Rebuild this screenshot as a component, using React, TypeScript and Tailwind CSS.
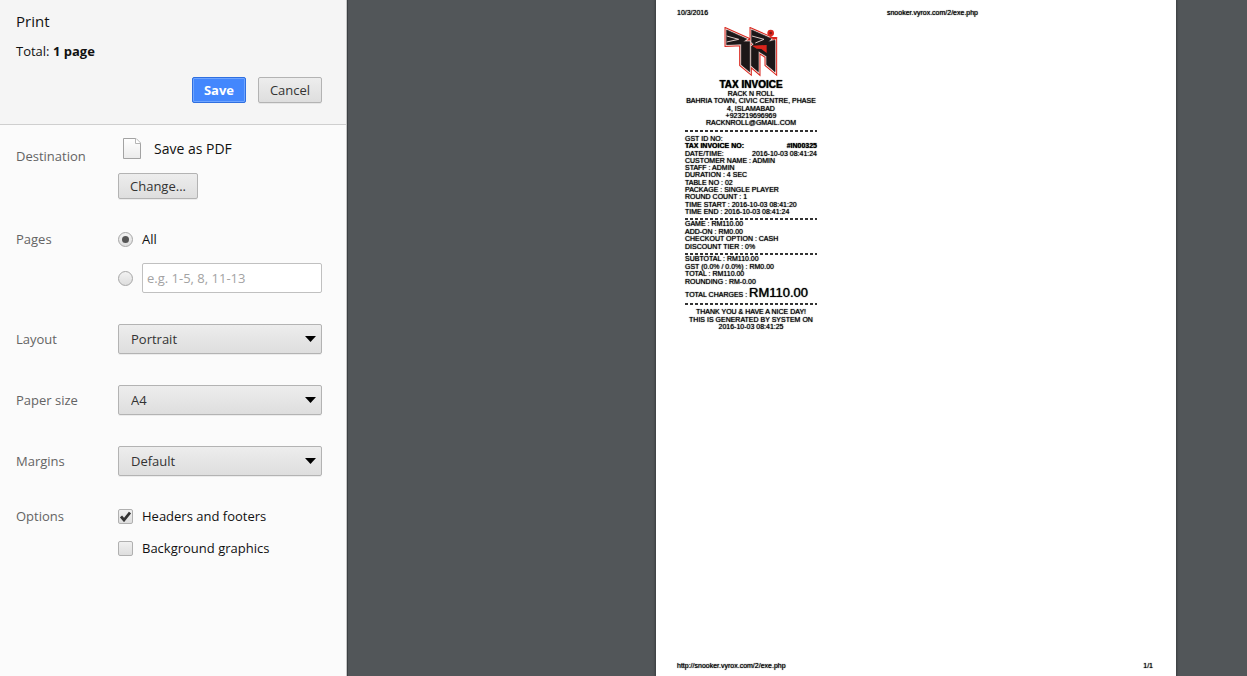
import { useId, useState } from "react";
import type { ReactNode } from "react";

const greyControl =
  "rounded-[2px] border border-[#b3b3b3] bg-gradient-to-b from-[#ededed] to-[#dedede] text-[#333] shadow-[0_1px_0_rgba(0,0,0,0.06)]";

function DocumentIcon() {
  return (
    <svg width="20" height="23" viewBox="0 0 20 23" aria-hidden="true">
      <defs>
        <linearGradient id="sheet" x1="0" y1="0" x2="0" y2="1">
          <stop offset="0" stopColor="#fff" />
          <stop offset="1" stopColor="#ebebeb" />
        </linearGradient>
      </defs>
      <path d="M1.500 1.500h12.500l4.500 4.500v15.500h-17z" fill="url(#sheet)" stroke="#a3a3a3" />
      <path d="M13.500 1.500v5h5" fill="#fff" stroke="#b5b5b5" />
    </svg>
  );
}

const logoLeft = "M8 9L68 36L57 44L77 44V134L52 113V51L8 53Z";
const logoRight = "M83 9L142 35L132 44L153 40V134L128 113V88L103 72V134L82 116V58L90 52L83 46Z";

function Logo() {
  return (
    <svg className="mx-auto" width="54" height="50" viewBox="0 0 162 150" aria-hidden="true">
      <g stroke="#d9251c" strokeWidth="13" fill="#d9251c" strokeLinejoin="miter" strokeMiterlimit="3">
        <path d={logoLeft} />
        <path d={logoRight} />
      </g>
      <g stroke="#f0dcd8" strokeWidth="7" fill="#f0dcd8" strokeMiterlimit="3">
        <path d={logoLeft} />
        <path d={logoRight} />
      </g>
      <g fill="#1c1718" stroke="#1c1718" strokeWidth="2">
        <path d={logoLeft} />
        <path d={logoRight} />
      </g>
      <path d="M84 56L128 54V78L112 66L98 65Z" fill="#d9251c" />
      <path d="M8 27L44 37L8 45" fill="none" stroke="#d8c5c2" strokeWidth="3" />
      <path d="M84 27L120 37L94 48" fill="none" stroke="#d8c5c2" strokeWidth="3" />
      <circle cx="140" cy="18" r="10" fill="#d9251c" />
      <circle cx="140" cy="18" r="4" fill="#7d1b16" />
      <path d="M134 30h27l-9 8z" fill="#d9251c" />
    </svg>
  );
}

function SelectRow({ label, options, value }: { label: string; options: string[]; value: string }) {
  const id = useId();
  return (
    <div className="flex items-center">
      <label htmlFor={id} className="w-[102px] shrink-0 text-[#646464]">
        {label}
      </label>
      <div className="relative flex-1">
        <select
          id={id}
          defaultValue={value}
          className={`h-[30px] w-full appearance-none pl-3 pr-7 ${greyControl}`}
        >
          {options.map((o) => (
            <option key={o}>{o}</option>
          ))}
        </select>
        <svg
          className="pointer-events-none absolute right-[6px] top-3"
          width="11"
          height="6"
          viewBox="0 0 11 6"
          aria-hidden="true"
        >
          <path d="M0 0h11L5.500 6z" fill="#000" />
        </svg>
      </div>
    </div>
  );
}

function Radio({
  id,
  label,
  checked,
  onSelect,
}: {
  id: string;
  label?: string;
  checked: boolean;
  onSelect: () => void;
}) {
  return (
    <span className="grid size-[15px] shrink-0 place-items-center">
      <input
        id={id}
        type="radio"
        name="pages"
        aria-label={label}
        checked={checked}
        onChange={onSelect}
        className="peer col-start-1 row-start-1 size-[15px] appearance-none rounded-full border border-[#a6a6a6] bg-gradient-to-b from-[#f2f2f2] to-[#dedede]"
      />
      <span className="pointer-events-none z-10 col-start-1 row-start-1 hidden size-[7px] rounded-full bg-[#555] peer-checked:block" />
    </span>
  );
}

function Check({ label, initial }: { label: string; initial: boolean }) {
  const [on, setOn] = useState(initial);
  return (
    <label className="flex h-5 items-center gap-[9px] text-[#111]">
      <span className="grid size-[15px] shrink-0 place-items-center">
        <input
          type="checkbox"
          checked={on}
          onChange={() => setOn(!on)}
          className="peer col-start-1 row-start-1 size-[15px] appearance-none rounded-[2px] border border-[#b0b0b0] bg-gradient-to-b from-[#f0f0f0] to-[#dedede]"
        />
        <svg
          className="pointer-events-none z-10 col-start-1 row-start-1 hidden peer-checked:block"
          width="11"
          height="11"
          viewBox="0 0 11 11"
          aria-hidden="true"
        >
          <path d="M1 5.500L4 9L10 1.500" fill="none" stroke="#333" strokeWidth="2.800" />
        </svg>
      </span>
      {label}
    </label>
  );
}

function Sidebar() {
  const [pages, setPages] = useState<"all" | "range">("all");
  return (
    <aside className="w-[347px] shrink-0 border-r border-[#c6c6c6] bg-[#fbfbfb] font-['Open_Sans','Noto_Sans',sans-serif] text-[13px] leading-5">
      <header className="border-b border-[#cfcfcf] bg-[#f5f5f5] pb-[21px] pl-4 pr-6 pt-[11px] text-[#111]">
        <h1 className="text-[15px] leading-5">Print</h1>
        <p className="mt-[10px]">
          Total: <b>1 page</b>
        </p>
        <div className="mt-4 flex justify-end gap-3">
          <button
            type="button"
            className="h-[26px] w-[54px] rounded-[2px] border border-[#2f6fe0] bg-[#4387fd] font-bold text-white shadow-[inset_0_0_0_1px_#6fa5ff]"
          >
            Save
          </button>
          <button type="button" className={`h-[26px] w-16 ${greyControl}`}>
            Cancel
          </button>
        </div>
      </header>

      <form className="pb-6 pl-4 pr-6 pt-3" onSubmit={(e) => e.preventDefault()}>
        <section className="flex">
          <h2 className="w-[102px] shrink-0 pt-[9px] text-[#646464]">Destination</h2>
          <div className="flex-1">
            <div className="flex items-center gap-3 pl-1 text-[14px] text-[#111]">
              <DocumentIcon />
              Save as PDF
            </div>
            <button type="button" className={`mt-[13px] h-[26px] w-20 ${greyControl}`}>
              Change...
            </button>
          </div>
        </section>

        <fieldset className="mt-[30px] flex">
          <legend className="float-left w-[102px] shrink-0 text-[#646464]">Pages</legend>
          <div className="flex-1">
            <div className="flex items-center gap-[9px] text-[#111]">
              <Radio id="pages-all" checked={pages === "all"} onSelect={() => setPages("all")} />
              <label htmlFor="pages-all">All</label>
            </div>
            <div className="mt-[14px] flex items-center gap-[9px]">
              <Radio
                id="pages-range"
                label="Page range"
                checked={pages === "range"}
                onSelect={() => setPages("range")}
              />
              <input
                type="text"
                aria-label="Pages to print"
                placeholder="e.g. 1-5, 8, 11-13"
                onFocus={() => setPages("range")}
                className="h-[30px] w-full min-w-0 rounded-[2px] border border-[#c0c0c0] bg-white px-1 placeholder:text-[#a3a3a3]"
              />
            </div>
          </div>
        </fieldset>

        <div className="mt-[31px] flex flex-col gap-[31px]">
          <SelectRow label="Layout" value="Portrait" options={["Portrait", "Landscape"]} />
          <SelectRow label="Paper size" value="A4" options={["A4", "Letter", "Legal"]} />
          <SelectRow label="Margins" value="Default" options={["Default", "None", "Minimum", "Custom"]} />
        </div>

        <fieldset className="mt-[30px]">
          <legend className="float-left w-[102px] text-[#646464]">Options</legend>
          <div className="flex flex-col gap-3">
            <Check label="Headers and footers" initial={true} />
            <Check label="Background graphics" initial={false} />
          </div>
        </fieldset>
      </form>
    </aside>
  );
}

function Rule({ className }: { className: string }) {
  return (
    <svg className={`block h-[2px] w-full ${className}`} aria-hidden="true">
      <line x1="0" y1="1" x2="100%" y2="1" stroke="#000" strokeWidth="2" strokeOpacity="0.8" strokeDasharray="3 2" />
    </svg>
  );
}

function Lines({ children, className }: { children: ReactNode; className: string }) {
  return <div className={`flex flex-col justify-between ${className}`}>{children}</div>;
}

function Receipt() {
  return (
    <article className="ml-[29px] mt-[10px] w-[132px] whitespace-nowrap text-[7px] leading-[7px]">
      <Logo />
      <h2 className="mt-[2px] text-center text-[10px] font-bold leading-[11px]">TAX INVOICE</h2>
      <Lines className="min-h-9 text-center">
        <p>RACK N ROLL</p>
        <p>BAHRIA TOWN, CIVIC CENTRE, PHASE</p>
        <p>4, ISLAMABAD</p>
        <p>+923219696969</p>
        <p>RACKNROLL@GMAIL.COM</p>
      </Lines>
      <Rule className="mb-[3px] mt-1" />
      <Lines className="min-h-20">
        <p>GST ID NO:</p>
        <p className="flex justify-between font-bold">
          <span>TAX INVOICE NO:</span>
          <span>#IN00325</span>
        </p>
        <p className="flex justify-between">
          <span>DATE/TIME:</span>
          <span>2016-10-03 08:41:24</span>
        </p>
        <p>CUSTOMER NAME : ADMIN</p>
        <p>STAFF : ADMIN</p>
        <p>DURATION : 4 SEC</p>
        <p>TABLE NO : 02</p>
        <p>PACKAGE : SINGLE PLAYER</p>
        <p>ROUND COUNT : 1</p>
        <p>TIME START : 2016-10-03 08:41:20</p>
        <p>TIME END : 2016-10-03 08:41:24</p>
      </Lines>
      <Rule className="mt-[3px]" />
      <Lines className="min-h-[30px]">
        <p>GAME : RM110.00</p>
        <p>ADD-ON : RM0.00</p>
        <p>CHECKOUT OPTION : CASH</p>
        <p>DISCOUNT TIER : 0%</p>
      </Lines>
      <Rule className="mt-[3px]" />
      <Lines className="min-h-[30px]">
        <p>SUBTOTAL : RM110.00</p>
        <p>GST (0.0% / 0.0%) : RM0.00</p>
        <p>TOTAL : RM110.00</p>
        <p>ROUNDING : RM-0.00</p>
      </Lines>
      <p className="leading-4">
        TOTAL CHARGES : <span className="text-[13px]">RM110.00</span>
      </p>
      <Rule className="mb-[3px]" />
      <Lines className="min-h-[22px] text-center">
        <p>THANK YOU &amp; HAVE A NICE DAY!</p>
        <p>THIS IS GENERATED BY SYSTEM ON</p>
        <p>2016-10-03 08:41:25</p>
      </Lines>
    </article>
  );
}

export default function App() {
  return (
    <div className="flex min-h-screen bg-[#525659] font-['Liberation_Sans',Arial,sans-serif] text-black">
      <Sidebar />
      <main className="flex flex-1 border-l border-[#3c4043] pr-[71px]">
        <section className="ml-auto flex w-[520px] flex-col bg-white shadow-[0_0_2px_1px_#3a3d3f] [text-shadow:0_0_1px_#000]">
          <header className="grid grid-cols-[1fr_auto_1fr] pl-[21px] pr-[23px] pt-[9px] text-[7px] leading-2">
            <span>10/3/2016</span>
            <span className="pl-[35px]">snooker.vyrox.com/2/exe.php</span>
          </header>
          <Receipt />
          <footer className="mt-auto flex justify-between pb-[6px] pl-[21px] pr-[23px] text-[7px] leading-2">
            <span>http://snooker.vyrox.com/2/exe.php</span>
            <span>1/1</span>
          </footer>
        </section>
      </main>
    </div>
  );
}
